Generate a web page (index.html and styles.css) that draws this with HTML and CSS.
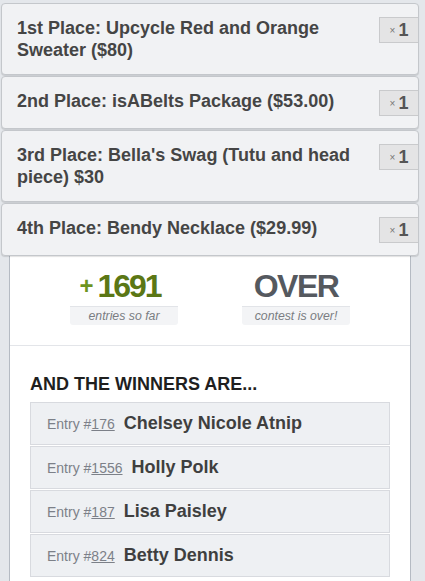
FILE: index.html
```html
<!DOCTYPE html>
<html>
<head>
<meta charset="utf-8">
<link rel="stylesheet" href="styles.css">
</head>
<body>
<div class="prizes">
  <div class="prize"><span class="qty"><span class="x">×</span>1</span><div class="title">1st Place: Upcycle Red and Orange Sweater ($80)</div></div>
  <div class="prize"><span class="qty"><span class="x">×</span>1</span><div class="title">2nd Place: isABelts Package ($53.00)</div></div>
  <div class="prize"><span class="qty"><span class="x">×</span>1</span><div class="title">3rd Place: Bella's Swag (Tutu and head piece) $30</div></div>
  <div class="prize"><span class="qty"><span class="x">×</span>1</span><div class="title">4th Place: Bendy Necklace ($29.99)</div></div>
</div>
<div class="panel">
  <div class="stats">
    <div class="stat">
      <div class="num green"><span class="plus">+</span>1691</div>
      <div class="label">entries so far</div>
    </div>
    <div class="stat">
      <div class="num gray">OVER</div>
      <div class="label">contest is over!</div>
    </div>
  </div>
  <div class="winners">
    <h2 class="heading">AND THE WINNERS ARE...</h2>
    <div class="row"><span class="entry">Entry #<u>176</u></span><span class="name">Chelsey Nicole Atnip</span></div>
    <div class="row"><span class="entry">Entry #<u>1556</u></span><span class="name">Holly Polk</span></div>
    <div class="row"><span class="entry">Entry #<u>187</u></span><span class="name">Lisa Paisley</span></div>
    <div class="row"><span class="entry">Entry #<u>824</u></span><span class="name">Betty Dennis</span></div>
  </div>
</div>
</body>
</html>
```

FILE: styles.css
```css
html, body {
  margin: 0;
  padding: 0;
}
body {
  background: #e4e7eb;
  font-family: "Liberation Sans", Arial, sans-serif;
  color: #444;
  height: 581px;
  overflow: hidden;
}
.prizes {
  padding: 3px 0 0 1px;
  width: 418px;
  position: relative;
  z-index: 2;
}
.prize {
  background: #f1f2f4;
  border: 1px solid #c4c7cb;
  border-radius: 4px;
  box-shadow: 0 1px 1px rgba(0,0,0,0.12);
  padding: 13px 0 13px 15px;
  min-height: 25px;
  margin-bottom: 1px;
}
.prize:last-child {
  margin-bottom: 0;
}
.title {
  font-weight: bold;
  font-size: 18px;
  line-height: 22px;
  color: #454545;
  margin-right: 52px;
}
.qty {
  float: right;
  width: 38px;
  height: 24px;
  line-height: 24px;
  background: #e4e4e5;
  border: 1px solid #c9cacc;
  border-right: none;
  text-align: center;
  font-weight: bold;
  font-size: 18px;
  color: #555;
}
.qty .x {
  font-size: 10px;
  font-weight: normal;
  color: #777;
  margin-right: 3px;
  vertical-align: 2px;
}
.panel {
  margin: 0 14px 0 9px;
  background: #fff;
  border-left: 1px solid #b5bbc3;
  border-right: 1px solid #b5bbc3;
  height: 325px;
}
.stats {
  display: flex;
  padding: 12px 28px 20px 28px;
  border-bottom: 1px solid #e3e5e9;
}
.stat {
  flex: 1;
  display: flex;
  flex-direction: column;
  align-items: center;
}
.num {
  font-weight: bold;
  font-size: 32px;
  line-height: 36px;
  letter-spacing: -2px;
  height: 36px;
}
.green {
  color: #5b7715;
  margin-left: -8px;
}
.plus {
  font-size: 24px;
  color: #6c941f;
  letter-spacing: 0;
  margin-right: 4px;
  vertical-align: 3px;
}
.gray {
  color: #55595f;
  letter-spacing: -1.5px;
}
.label {
  margin-top: 2px;
  width: 108px;
  height: 18px;
  line-height: 18px;
  background: #f3f4f6;
  border-top: 1px solid #e2e4e8;
  border-radius: 0 0 3px 3px;
  text-align: center;
  font-style: italic;
  font-size: 12.3px;
  color: #7a7d82;
}
.winners {
  padding: 28px 20px 0 20px;
}
.heading {
  margin: 0 0 8px 0;
  font-size: 18px;
  line-height: 20px;
  font-weight: bold;
  color: #1f1f1f;
}
.row {
  background: #eef0f3;
  border: 1px solid #d8dadf;
  height: 41px;
  display: flex;
  align-items: center;
  padding-left: 16px;
  margin-bottom: 1px;
}
.entry {
  font-size: 14px;
  color: #7c8088;
}
.entry u {
  text-decoration-color: #7c8088;
}
.name {
  font-size: 18px;
  font-weight: bold;
  color: #3f3f3f;
  margin-left: 9px;
}
```
